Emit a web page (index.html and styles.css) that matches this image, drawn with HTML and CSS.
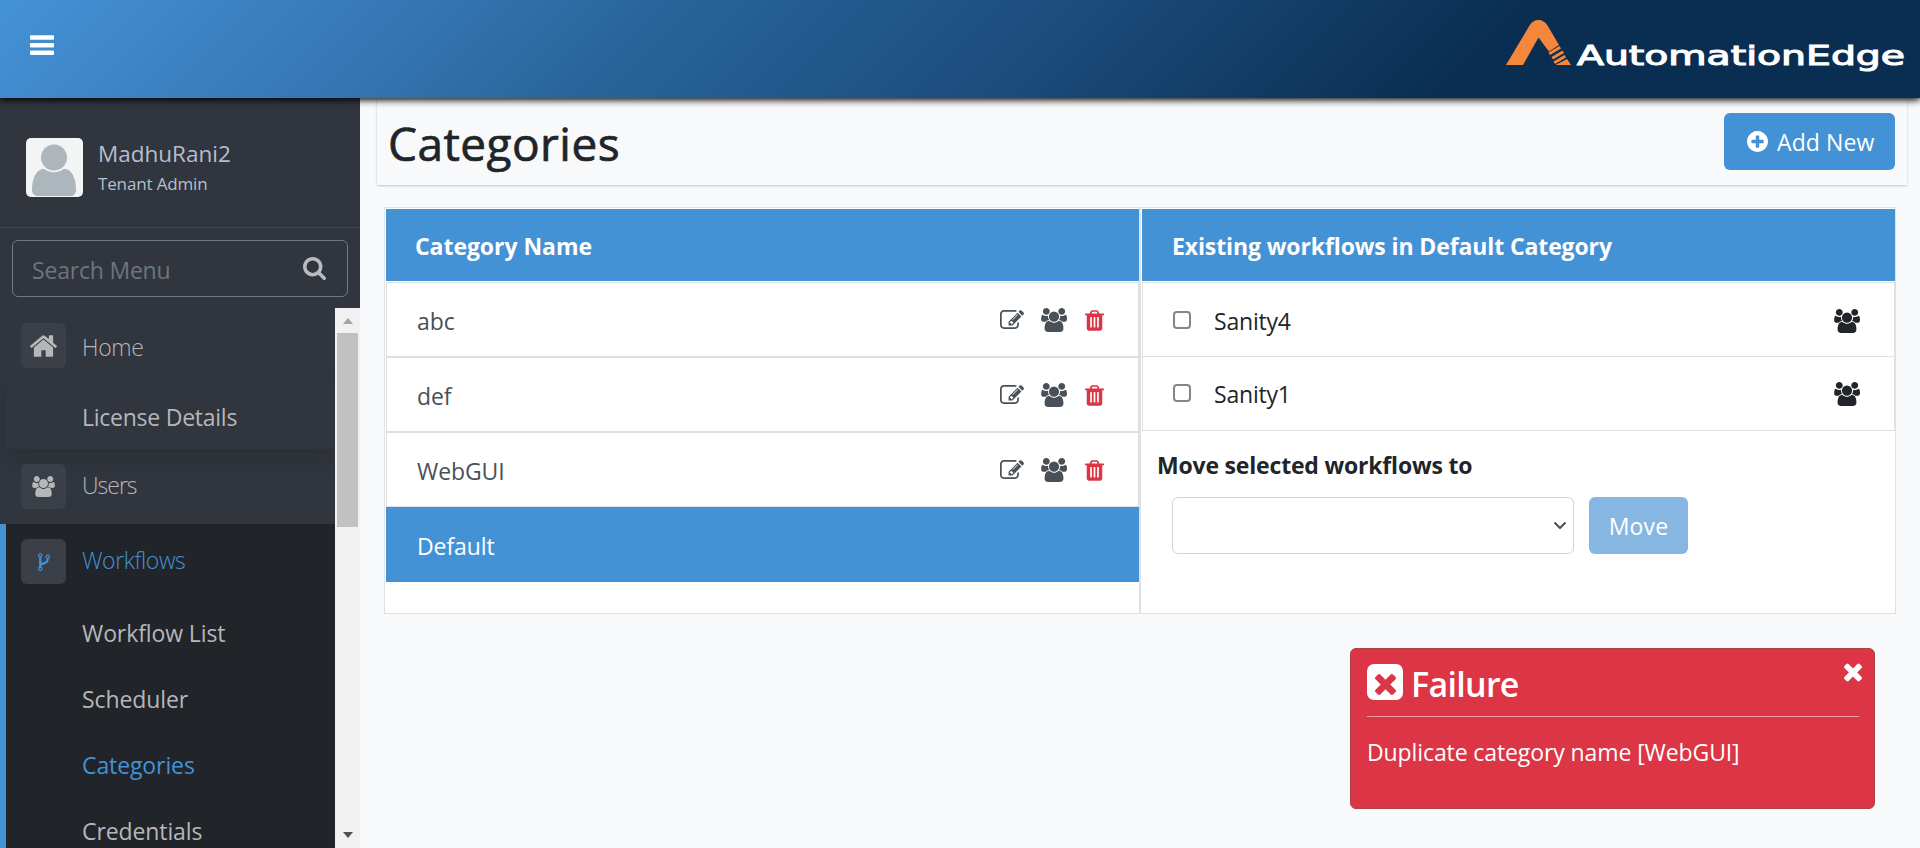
FILE: index.html
```
<!DOCTYPE html>
<html lang="en">
<head>
<meta charset="utf-8">
<title>Categories</title>
<link rel="stylesheet" href="styles.css">
</head>
<body>
<svg class="defs" width="0" height="0">
  <symbol id="users" viewBox="0 0 1920 1792"><path d="M593 896q-162 5-265 128h-134q-82 0-138-40.500t-56-118.500q0-353 124-353 6 0 43.500 21t97.500 42.500 119 21.500q67 0 133-23-5 37-5 66 0 159 93 256zm1071 637q0 120-73 189.500t-194 69.500h-874q-121 0-194-69.500t-73-189.500q0-53 3.500-103.500t14-109 26.500-108.500 43-97.500 62-81 85.500-53.500 111.500-20q10 0 43 21.500t73 48 107 48 135 21.500 135-21.500 107-48 73-48 43-21.500q61 0 111.500 20t85.500 53.500 62 81 43 97.500 26.500 108.500 14 109 3.500 103.500zm-1024-1277q0 106-75 181t-181 75-181-75-75-181 75-181 181-75 181 75 75 181zm704 384q0 159-112.500 271.500t-271.500 112.500-271.500-112.500-112.500-271.500 112.500-271.500 271.500-112.500 271.500 112.500 112.500 271.500zm576 225q0 78-56 118.500t-138 40.500h-134q-103-123-265-128 93-97 93-256 0-29-5-66 66 23 133 23 59 0 119-21.500t97.500-42.500 43.500-21q124 0 124 353zm-128-609q0 106-75 181t-181 75-181-75-75-181 75-181 181-75 181 75 75 181z"/></symbol>
  <symbol id="edit" viewBox="0 128 1792 1408"><path d="M888 1184l116-116-152-152-116 116v56h96v96h56zm440-720q-16-16-33 1l-350 350q-17 17-1 33t33-1l350-350q17-17 1-33zm80 594v190q0 119-84.500 203.500t-203.500 84.500h-832q-119 0-203.500-84.500t-84.500-203.500v-832q0-119 84.500-203.500t203.500-84.500h832q63 0 117 25 15 7 18 23 3 17-9 29l-49 49q-14 14-32 8-23-6-45-6h-832q-66 0-113 47t-47 113v832q0 66 47 113t113 47h832q66 0 113-47t47-113v-126q0-13 9-22l64-64q15-15 35-7t20 29zm-96-738l288 288-672 672h-288v-288zm444 132l-92 92-288-288 92-92q28-28 68-28t68 28l152 152q28 28 28 68t-28 68z"/></symbol>
  <symbol id="trash" viewBox="192 128 1408 1536"><path d="M704 1376v-704q0-14-9-23t-23-9h-64q-14 0-23 9t-9 23v704q0 14 9 23t23 9h64q14 0 23-9t9-23zm256 0v-704q0-14-9-23t-23-9h-64q-14 0-23 9t-9 23v704q0 14 9 23t23 9h64q14 0 23-9t9-23zm256 0v-704q0-14-9-23t-23-9h-64q-14 0-23 9t-9 23v704q0 14 9 23t23 9h64q14 0 23-9t9-23zm-544-992h448l-48-117q-7-9-17-11h-317q-10 2-17 11zm928 32v64q0 14-9 23t-23 9h-96v948q0 83-47 143.500t-113 60.500h-832q-66 0-113-58.500t-47-141.500v-952h-96q-14 0-23-9t-9-23v-64q0-14 9-23t23-9h309l70-167q15-37 54-63t79-26h320q40 0 79 26t54 63l70 167h309q14 0 23 9t9 23z"/></symbol>
  <symbol id="times" viewBox="302 366 1188 1188"><path d="M1490 1322q0 40-28 68l-136 136q-28 28-68 28t-68-28l-294-294-294 294q-28 28-68 28t-68-28l-136-136q-28-28-28-68t28-68l294-294-294-294q-28-28-28-68t28-68l136-136q28-28 68-28t68 28l294 294 294-294q28-28 68-28t68 28l136 136q28 28 28 68t-28 68l-294 294 294 294q28 28 28 68z"/></symbol>
</svg>

<header class="topbar">
  <svg class="burger" viewBox="0 0 24 20"><rect y="0.300" width="24" height="4.500" rx="1"/><rect y="7.900" width="24" height="4.500" rx="1"/><rect y="15.500" width="24" height="4.500" rx="1"/></svg>
  <svg class="logo" viewBox="0 0 400 60">
    <g class="logo-mark">
      <path d="M0 45L23.500 5.500Q27 0 32.500 0Q38 0 41.500 5.500L53 25L43 31.500L32.500 17.500L17 45Z"/>
      <path d="M42.500 32.500L53.500 26L55 28.500L44 35ZM45.500 37L56.500 30.500L58 33L47 39.500ZM47.500 41.500L58.500 35L60 37.500L49 44ZM49.500 45L61 39L65 45Z"/>
    </g>
    <text class="logo-text" x="71" y="44.500" textLength="328" lengthAdjust="spacingAndGlyphs">AutomationEdge</text>
  </svg>
</header>

<div class="layout">
  <aside class="sidebar">
    <div class="profile">
      <svg class="avatar" viewBox="0 0 57 59"><rect width="57" height="59" rx="5" fill="#f3f4f4"/><path d="M6 58V50Q7 34 16 31H40Q49 34 50 50V53Q49 58 44 58H12Q7 58 6 53Z" fill="#adb5bd"/><circle cx="28" cy="19.500" r="15" fill="#f3f4f4"/><circle cx="28" cy="19.500" r="13" fill="#adb5bd"/></svg>
      <div class="who"><div class="user-name">MadhuRani2</div><div class="user-role">Tenant Admin</div></div>
    </div>
    <div class="search">
      <span>Search Menu</span>
      <svg viewBox="64 128 1664 1664"><path d="M1216 832q0-185-131.500-316.500t-316.500-131.500-316.500 131.500-131.500 316.500 131.500 316.500 316.500 131.500 316.500-131.500 131.500-316.500zm512 832q0 52-38 90t-90 38q-54 0-90-38l-343-342q-179 124-399 124-143 0-273.500-55.500t-225-150-150-225-55.500-273.500 55.500-273.500 150-225 225-150 273.500-55.500 273.500 55.500 225 150 150 225 55.500 273.500q0 220-124 399l343 343q37 37 37 90z"/></svg>
    </div>
    <div class="menu-area">
      <nav class="menu">
        <div class="item home"><span class="chip"><svg class="i-home" viewBox="89 253 1614 1283"><path d="M1472 992v480q0 26-19 45t-45 19h-384v-384h-256v384h-384q-26 0-45-19t-19-45v-480q0-1 .5-3t.5-3l575-474 575 474q1 2 1 6zm223-69l-62 74q-8 9-21 11h-3q-13 0-21-7l-692-577-692 577q-12 8-24 7-13-2-21-11l-62-74q-8-10-7-23.500t11-21.500l719-599q32-26 76-26t76 26l244 204v-195q0-14 9-23t23-9h192q14 0 23 9t9 23v408l219 182q10 8 11 21.500t-7 23.500z"/></svg></span><span class="label">Home</span></div>
        <div class="license"><span>License Details</span></div>
        <div class="item users"><span class="chip"><svg class="i-users"><use href="#users"/></svg></span><span class="label t-users">Users</span></div>
        <div class="group">
          <div class="item flows"><span class="chip"><svg class="i-fork" viewBox="384 128 1024 1536"><path d="M672 1472q0-40-28-68t-68-28-68 28-28 68 28 68 68 28 68-28 28-68zm0-1152q0-40-28-68t-68-28-68 28-28 68 28 68 68 28 68-28 28-68zm640 128q0-40-28-68t-68-28-68 28-28 68 28 68 68 28 68-28 28-68zm96 0q0 52-26 96.500t-70 69.500q-2 287-226 414-67 38-203 81-128 40-169.500 71t-41.500 100v26q44 25 70 69.500t26 96.500q0 80-56 136t-136 56-136-56-56-136q0-52 26-96.500t70-69.500v-820q-44-25-70-69.500t-26-96.500q0-80 56-136t136-56 136 56 56 136q0 52-26 96.500t-70 69.500v497q54-26 154-57 55-17 87.500-29.500t70.500-31 59-39.500 40.500-51 28-69.500 8.500-91.500q-44-25-70-69.500t-26-96.500q0-80 56-136t136-56 136 56 56 136z"/></svg></span><span class="label">Workflows</span></div>
          <div class="sub"><span>Workflow List</span></div>
          <div class="sub"><span>Scheduler</span></div>
          <div class="sub on"><span>Categories</span></div>
          <div class="sub"><span>Credentials</span></div>
        </div>
      </nav>
      <div class="scrollbar"><i class="up"></i><i class="thumb"></i><i class="down"></i></div>
    </div>
  </aside>

  <main class="main">
    <div class="page-head">
      <h1>Categories</h1>
      <button class="btn add"><svg viewBox="128 128 1536 1536"><path d="M1344 960v-128q0-26-19-45t-45-19h-256v-256q0-26-19-45t-45-19h-128q-26 0-45 19t-19 45v256h-256q-26 0-45 19t-19 45v128q0 26 19 45t45 19h256v256q0 26 19 45t45 19h128q26 0 45-19t19-45v-256h256q26 0 45-19t19-45zm320-64q0 209-103 385.500t-279.500 279.500-385.500 103-385.500-103-279.500-279.500-103-385.500 103-385.500 279.500-279.500 385.500-103 385.500 103 279.500 279.500 103 385.500z"/></svg><span>Add New</span></button>
    </div>
    <div class="panels">
      <section class="left">
        <h2>Category Name</h2>
        <div class="row"><span>abc</span><svg class="r-edit"><use href="#edit"/></svg><svg class="r-users"><use href="#users"/></svg><svg class="r-trash"><use href="#trash"/></svg></div>
        <div class="row"><span>def</span><svg class="r-edit"><use href="#edit"/></svg><svg class="r-users"><use href="#users"/></svg><svg class="r-trash"><use href="#trash"/></svg></div>
        <div class="row"><span>WebGUI</span><svg class="r-edit"><use href="#edit"/></svg><svg class="r-users"><use href="#users"/></svg><svg class="r-trash"><use href="#trash"/></svg></div>
        <div class="row active"><span>Default</span></div>
      </section>
      <section class="right">
        <h2>Existing workflows in Default Category</h2>
        <div class="flow"><i class="check"></i><span>Sanity4</span><svg class="r-users"><use href="#users"/></svg></div>
        <div class="flow second"><i class="check"></i><span>Sanity1</span><svg class="r-users"><use href="#users"/></svg></div>
        <div class="move-label"><span>Move selected workflows to</span></div>
        <div class="move-row">
          <div class="select"><svg viewBox="0 0 14 9"><path d="M1.500 1.500L7 7L12.500 1.500"/></svg></div>
          <button class="btn move"><span>Move</span></button>
        </div>
      </section>
    </div>
  </main>
</div>

<div class="toast">
  <svg class="close"><use href="#times"/></svg>
  <div class="toast-head"><span class="sq"><svg><use href="#times"/></svg></span><strong>Failure</strong></div>
  <p><span>Duplicate category name [WebGUI]</span></p>
</div>
</body>
</html>
```
FILE: styles.css
```
* { box-sizing: border-box; }
body { margin: 0; height: 848px; overflow: hidden; background: #f8f9fb; color: #212529; font-family: "Open Sans", "Noto Sans", sans-serif; font-size: 23px; line-height: 34px; letter-spacing: -.1px; }
svg { display: block; fill: currentColor; flex: none; }
.defs { position: absolute; }
h1, h2, p { margin: 0; }
span { white-space: nowrap; }

.topbar { position: relative; z-index: 2; height: 98px; padding: 0 14px 0 30px; display: flex; justify-content: space-between; color: #fff; background: linear-gradient(135deg, #4492d6 0%, #3677b6 20%, #29659a 33%, #1b4c7c 54%, #0a2e52 76%); box-shadow: 0 2px 7px #000; }
.burger { width: 24px; height: 20px; margin-top: 35px; }
.logo { width: 400px; height: 60px; margin-top: 20px; }
.logo-mark { fill: #f5873c; }
.logo-text { font: 27px "DejaVu Sans", sans-serif; letter-spacing: 0; fill: #fff; stroke: #fff; stroke-width: 1.100px; }

.layout { display: flex; height: 750px; }
.sidebar { width: 360px; background: #31353d; display: flex; flex-direction: column; }
.profile { height: 130px; border-bottom: 1px solid #3f444f; padding: 40px 26px 0; display: flex; gap: 15px; }
.avatar { width: 57px; height: 59px; }
.user-name { color: #b6bdd0; font-size: 22.500px; line-height: 32px; letter-spacing: 0; }
.user-role { color: #b8bfce; font-size: 17px; line-height: 26px; margin-top: 1px; letter-spacing: -.15px; }
.search { margin: 12px 12px 11px; height: 57px; border: 1px solid #727781; border-radius: 6px; padding: 3px 21px 0 19px; display: flex; align-items: center; justify-content: space-between; color: #6d757d; letter-spacing: -.2px; }
.search svg { width: 23px; height: 23px; color: #b8bbbf; margin-bottom: 3px; }
.menu-area { height: 540px; display: flex; }
.menu { width: 335px; color: #b6b7b9; letter-spacing: -.25px; }
.item { display: flex; padding-left: 21px; gap: 16px; }
.chip { width: 45px; height: 45px; border-radius: 6px; background: #3a3f48; display: flex; align-items: center; justify-content: center; }
.label { font-weight: 300; line-height: 34px; letter-spacing: -.4px; }
.home { height: 72px; padding-top: 15px; }
.home .label { margin-top: 7px; }
.i-home { width: 27px; height: 22px; }
.license { height: 69px; margin-left: 6px; padding: 20px 0 0 76px; box-shadow: 0 8px 18px rgba(0, 0, 0, .13); }
.users { height: 75px; padding-top: 15px; }
.users .label { margin-top: 4px; }
.t-users { letter-spacing: -1px; }
.i-users { width: 23px; height: 21px; }
.group { height: 324px; background: #212429; border-left: 6px solid #4492d6; }
.flows { padding: 15px 0 0 15px; height: 76px; color: #4492d6; }
.flows .label { margin-top: 4px; }
.i-fork { width: 12px; height: 18px; }
.sub { height: 66px; padding: 16px 0 0 76px; letter-spacing: -.1px; }
.sub:last-child { height: 50px; }
.sub.on { color: #4492d6; }
.scrollbar { width: 25px; background: #f1f1f1; display: flex; flex-direction: column; align-items: center; }
.up { margin-top: 10px; border: 5.500px solid transparent; border-top: 0; border-bottom: 6px solid #a3a3a3; }
.thumb { width: 21px; height: 194px; margin-top: 9px; background: #c1c1c1; }
.down { margin-top: 305px; border: 5.500px solid transparent; border-bottom: 0; border-top: 6px solid #505050; }

.main { flex: 1; padding: 0 13px 0 17px; }
.page-head { height: 87px; padding: 0 12px 0 11px; display: flex; justify-content: space-between; box-shadow: 0 1px 2px rgba(60, 60, 80, .28); }
h1 { font-size: 46px; font-weight: 500; line-height: 60px; margin-top: 15px; letter-spacing: .45px; -webkit-text-stroke: .7px #212529; }
.btn { border: 0; border-radius: 6px; color: #fff; background: #4492d6; font: inherit; height: 57px; display: flex; align-items: center; padding: 1px 0 0; letter-spacing: .1px; }
.add { width: 171px; margin-top: 15px; padding-left: 23px; gap: 9px; }
.add svg { width: 21px; height: 21px; margin-bottom: 2px; }
.panels { margin: 22px 11px 0 7px; height: 407px; border: 1px solid #dee2e6; background: #fff; display: flex; }
.left { width: 756px; padding: 1px 0 0 1px; border-right: 2px solid #dee2e6; }
.right { flex: 1; padding: 1px 0 0 1px; }
h2 { height: 73px; background: #4492d6; border-bottom: 1px solid #fff; color: #fff; font-size: 23px; line-height: 75px; font-weight: 700; text-indent: 29px; white-space: nowrap; letter-spacing: -.05px; }
.right h2 { text-indent: 30px; letter-spacing: -.11px; }
.row { height: 75px; border: 1px solid #dedfe1; padding: 3px 34px 0 30px; display: flex; align-items: center; color: #495057; }
.row span { flex: 1; }
.r-edit { width: 24px; height: 19px; margin: 0 17px 3px 0; }
.r-users { width: 26px; height: 24px; margin-bottom: 1px; }
.row .r-users { margin-right: 18px; margin-bottom: 2px; }
.r-trash { width: 19px; height: 21px; color: #dc3545; margin-bottom: 1px; }
.row.active { background: #4492d6; border-color: #4492d6; color: #fff; }
.flow { height: 75px; border: 1px solid #dee0e2; padding: 3px 34px 0 30px; display: flex; align-items: center; letter-spacing: -.2px; }
.flow.second { height: 74px; border-top: 0; padding-top: 1px; }
.flow span { flex: 1; }
.check { width: 18px; height: 18px; border: 2px solid #858585; border-radius: 4px; margin: 0 23px 3px 0; }
.move-label { height: 66px; padding: 17px 0 0 15px; font-weight: 700; letter-spacing: -.19px; }
.move-row { display: flex; gap: 15px; padding-left: 30px; }
.select { width: 402px; height: 57px; border: 1px solid #ced4da; border-radius: 6px; display: flex; align-items: center; justify-content: flex-end; padding-right: 6px; }
.select svg { width: 14px; height: 9px; fill: none; stroke: #495057; stroke-width: 2; }
.move { width: 99px; background: #86b7e3; justify-content: center; }

.toast { position: absolute; z-index: 3; left: 1350px; top: 648px; width: 525px; height: 161px; border: 1px solid #b04148; border-radius: 6px; background: #dc3545; color: #fff; padding: 0 15px 0 16px; }
.close { position: absolute; right: 12px; top: 14px; width: 18px; height: 19px; }
.toast-head { display: flex; height: 68px; border-bottom: 1px solid #eda0a7; padding-top: 15px; gap: 8px; }
.sq { width: 36px; height: 36px; background: #fff; border-radius: 7px; color: #dc3545; display: flex; align-items: center; justify-content: center; }
.sq svg { width: 21px; height: 21px; margin-top: 4px; }
.toast-head strong { font-size: 34px; font-weight: 600; line-height: 40px; letter-spacing: -.7px; }
.toast p { margin-top: 18px; letter-spacing: -.1px; }
```
